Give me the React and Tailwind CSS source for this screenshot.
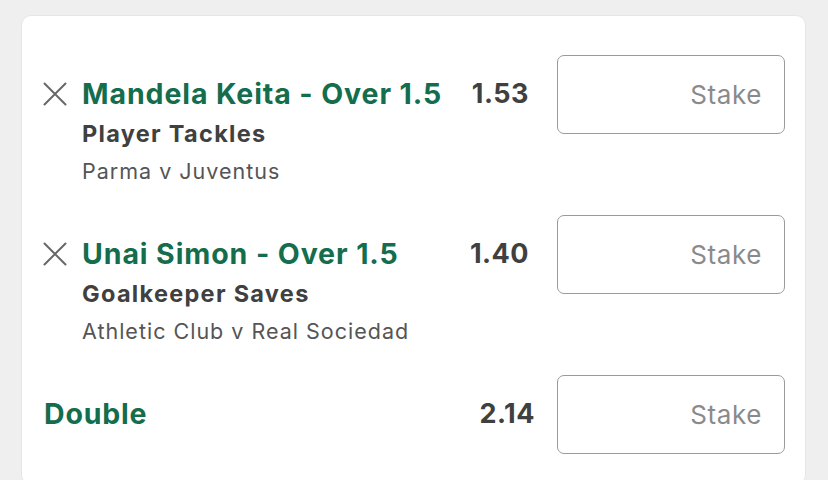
const font = { fontFamily: "Inter, 'Noto Sans', sans-serif" };

function RemoveIcon() {
  return (
    <svg width="24" height="24" viewBox="0 0 24 24" className="text-[#676767]">
      <path d="M1.5 1.5 L22.5 22.5 M22.5 1.5 L1.5 22.5" stroke="currentColor" strokeWidth="2" strokeLinecap="round" />
    </svg>
  );
}

function StakeBox() {
  return (
    <div className="w-[228px] h-[79px] shrink-0 rounded-[7px] border-[1.5px] border-[#9a9a9a] flex items-center justify-end pr-[22px]">
      <span className="text-[26px] tracking-[0.6px] text-[#8a8a8a]">Stake</span>
    </div>
  );
}

function Selection({ title, market, event, odds }) {
  return (
    <div className="flex items-start">
      <div className="flex-1 flex items-start mt-[23px]">
        <div className="w-[59px] h-[32px] flex items-center pl-[20px]">
          <RemoveIcon />
        </div>
        <div className="flex flex-col">
          <div className="text-[28.5px] leading-[32px] font-bold text-[#146d4c] tracking-[0.9px]">{title}</div>
          <div className="mt-[10px] text-[23.5px] leading-[28px] font-bold text-[#404040] tracking-[1.3px]">{market}</div>
          <div className="mt-[9px] text-[21.5px] leading-[28px] text-[#555555] tracking-[1px]">{event}</div>
        </div>
      </div>
      <div className="h-[79px] flex items-center pr-[28px] text-[27px] font-bold text-[#404040] tracking-[0.5px]">{odds}</div>
      <StakeBox />
    </div>
  );
}

export default function App() {
  return (
    <div style={font} className="w-[828px] h-[480px] bg-[#efefef] pt-[15px] pl-[21px] pr-[22px] overflow-hidden">
      <div className="bg-white rounded-[10px] border border-[#e6e6e6] pt-[39px] pl-[1px] pr-[20px] pb-[30px] flex flex-col gap-[30px]">
        <Selection title="Mandela Keita - Over 1.5" market="Player Tackles" event="Parma v Juventus" odds="1.53" />
        <Selection title="Unai Simon - Over 1.5" market="Goalkeeper Saves" event="Athletic Club v Real Sociedad" odds="1.40" />
        <div className="flex items-center">
          <div className="flex-1 pl-[21px] text-[28.5px] font-bold text-[#146d4c] tracking-[0.8px]">Double</div>
          <div className="pr-[22px] text-[27px] font-bold text-[#404040] tracking-[0.5px]">2.14</div>
          <StakeBox />
        </div>
      </div>
    </div>
  );
}
